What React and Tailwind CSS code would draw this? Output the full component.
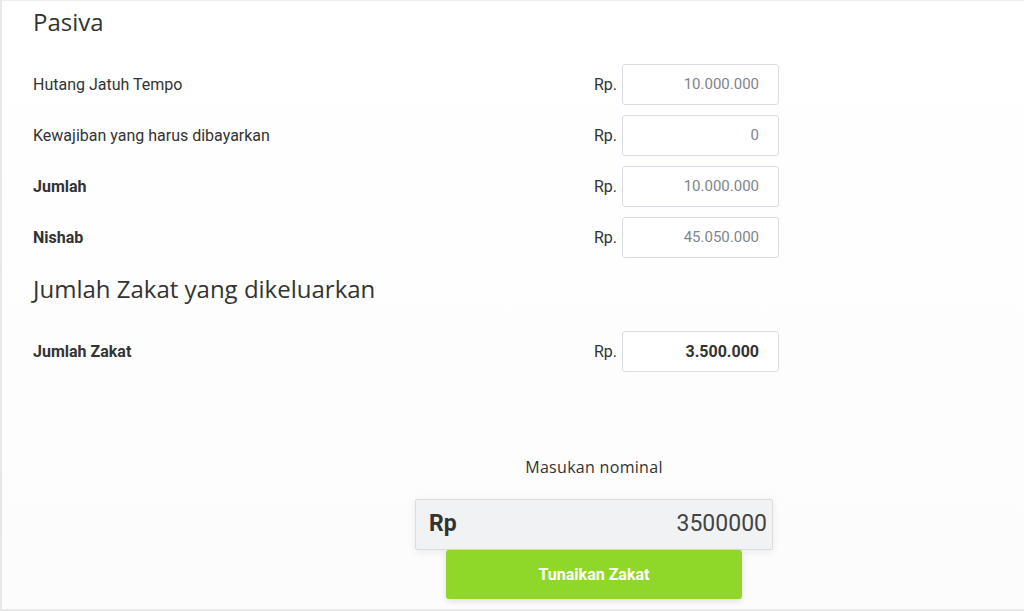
import React from 'react';

const rows = [
  { label: 'Hutang Jatuh Tempo', value: '10.000.000' },
  { label: 'Kewajiban yang harus dibayarkan', value: '0' },
  { label: 'Jumlah', value: '10.000.000', bold: true },
  { label: 'Nishab', value: '45.050.000', bold: true },
];

function Row({ label, value, bold, strong }) {
  return (
    <div className="flex h-[41px] items-center justify-between">
      <span className={`text-[16px] text-[#333] ${bold ? 'font-bold' : ''}`}>{label}</span>
      <div className="flex items-center gap-[5px]">
        <span className="text-[16px] text-[#333]">Rp.</span>
        <div
          className={`flex h-[41px] w-[157px] items-center justify-end rounded-[3px] border border-[#d9dee4] bg-white pr-[19px] ${
            strong ? 'text-[16px] font-bold text-[#333]' : 'text-[15px] text-[#80858c]'
          }`}
        >
          {value}
        </div>
      </div>
    </div>
  );
}

export default function App() {
  return (
    <div className="h-[611px] w-[1024px] overflow-hidden bg-[#e8e8e8] font-['Roboto',sans-serif]">
      <div className="ml-[2px] h-[609px] border-t border-[#eeeeee] bg-gradient-to-b from-white to-[#fcfcfc]">
        <div className="w-[777px] pl-[31px]">
          <h2 className="pt-[6px] font-['Open_Sans',sans-serif] text-[24px] leading-[30px] text-[#333]">Pasiva</h2>

          <div className="mt-[27px] flex flex-col gap-[10px]">
            {rows.map((r) => (
              <Row key={r.label} {...r} />
            ))}
          </div>

          <h2 className="mt-[16px] font-['Open_Sans',sans-serif] text-[24px] leading-[30px] text-[#333]">
            Jumlah Zakat yang dikeluarkan
          </h2>

          <div className="mt-[27px]">
            <Row label="Jumlah Zakat" value="3.500.000" bold strong />
          </div>

          <div className="ml-[382px] mt-[83px] flex w-[358px] flex-col items-center">
            <p className="font-['Open_Sans',sans-serif] text-[16px] tracking-[0.3px] text-[#333]">Masukan nominal</p>
            <div className="mt-[20px] flex h-[51px] w-[358px] items-center justify-between rounded-[2px] border border-[#dcdcdc] bg-[#f1f2f4] pl-[13px] pr-[5px] shadow-[0_2px_8px_rgba(0,0,0,0.08)]">
              <span className="text-[23px] font-bold text-[#333]">Rp</span>
              <span className="text-[23px] text-[#444]">3500000</span>
            </div>
            <button className="flex h-[49px] w-[296px] items-center justify-center rounded-[3px] bg-[#8fd82a] text-[16px] font-bold text-white shadow-[0_2px_6px_rgba(0,0,0,0.12)]">
              Tunaikan Zakat
            </button>
          </div>
        </div>
      </div>
    </div>
  );
}
